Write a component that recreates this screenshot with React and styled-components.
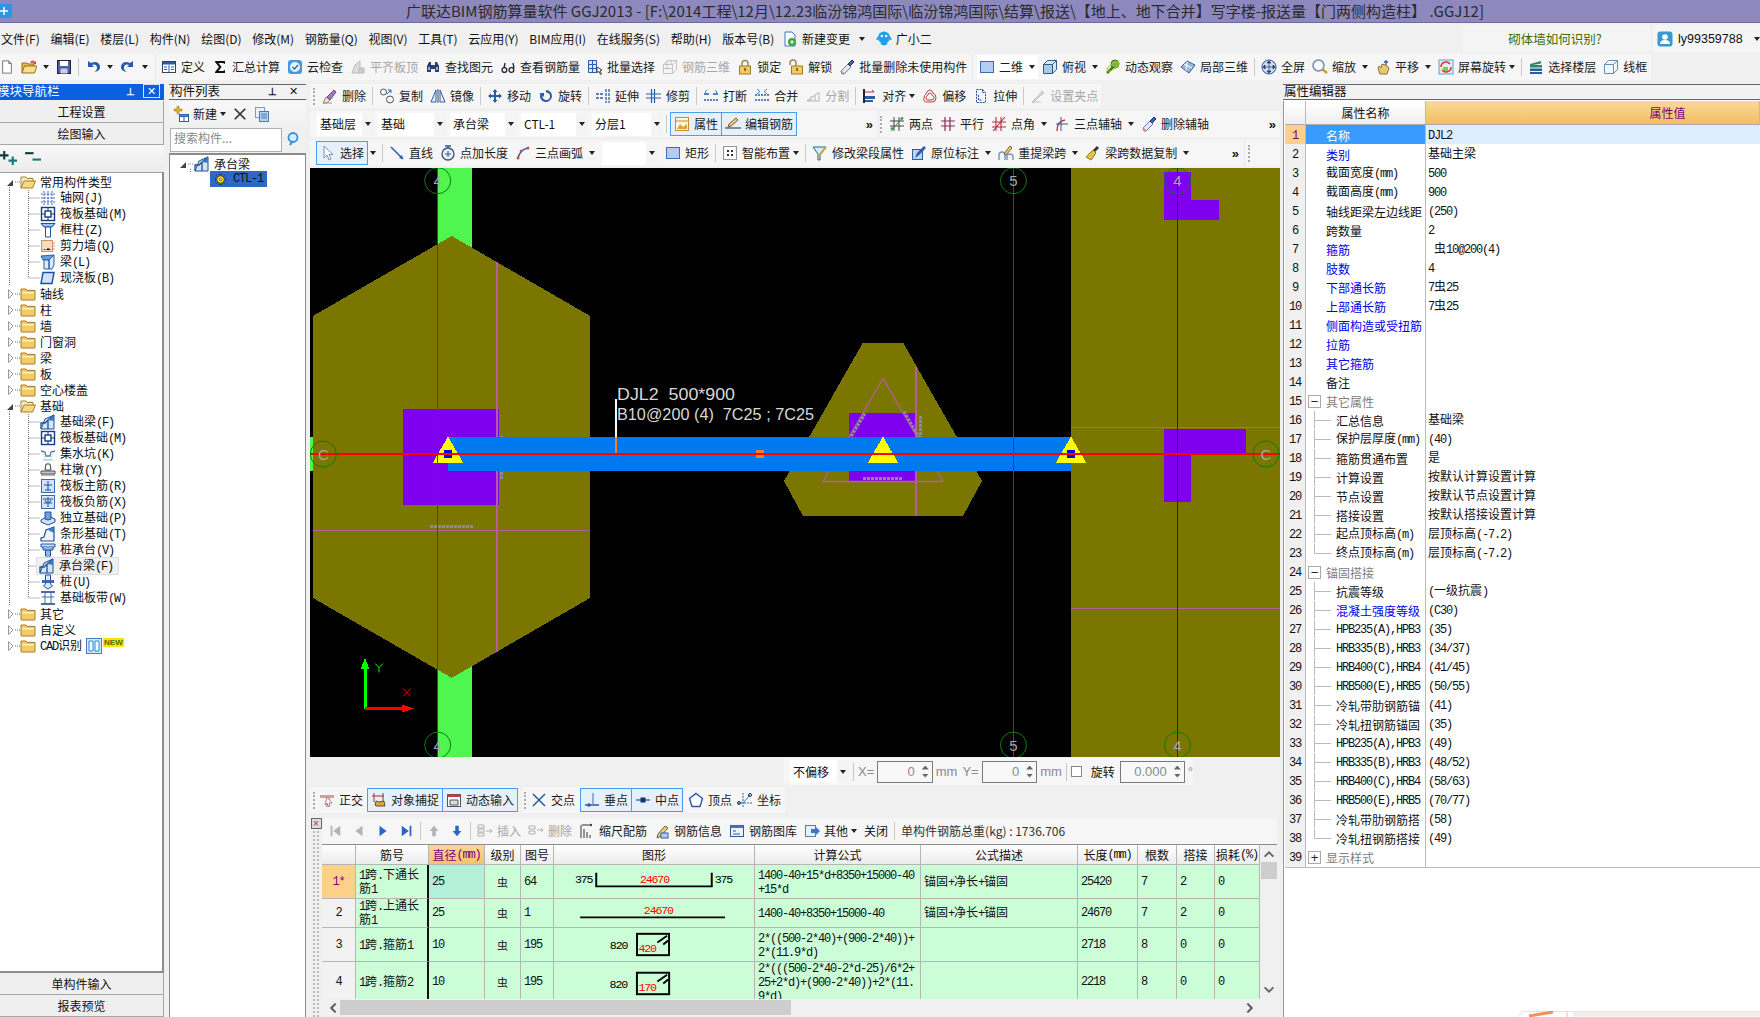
import React from "react"
import styled, { createGlobalStyle } from "styled-components"

const GlobalStyle = createGlobalStyle`
  * { box-sizing: border-box; }
  html, body { margin: 0; padding: 0; overflow: hidden; background: #f0f0f0; }
  body { font: 12px/16px "Noto Sans CJK SC", "Liberation Sans", sans-serif; color: #111; }
`

/* ---------- icons ---------- */
const B = "#2a5ca8"
const icons = {
  doc: <><path d="M3 1h7l3 3v11H3z" fill="#fff" stroke="#667" /><path d="M10 1v3h3" fill="#dde" stroke="#667" /></>,
  open: <><path d="M1 14V4h5l1 1h6v2" fill="#e8b94a" stroke="#94701f" /><path d="M1 14l2.500-7H16l-2.500 7z" fill="#fbdf8f" stroke="#94701f" /><path d="M9 3q3-3 5 0l1-1v3h-3l1-1q-2-1-3 0" fill="#c44" /></>,
  save: <><rect x="1.500" y="1.500" width="13" height="13" fill="#4a5fae" stroke="#223" /><rect x="4" y="2" width="8" height="5" fill="#fff" /><rect x="4.500" y="9.500" width="7" height="5" fill="#c9cfe8" /></>,
  undo: <path d="M3 2v6h6L7 6q4-1.500 5 2 .5 3-3 5 7-1 6-6-2-6-9-3z" fill={B} />,
  redo: <path d="M13 2v6H7l2-2q-4-1.500-5 2-.5 3 3 5-7-1-6-6 2-6 9-3z" fill={B} />,
  define: <><rect x="1.500" y="2.500" width="13" height="11" fill="#fff" stroke="#345" /><rect x="2" y="3" width="12" height="2.500" fill={B} /><path d="M8 6v7M3 8h3M3 10.500h3M10 8h3M10 10.500h3" stroke={B} /></>,
  sigma: <path d="M3 2h10v3L11 4H6.500L9.500 8l-3 4H11l2-1v3H3v-1l4-5-4-5z" fill="#111" />,
  cloud: <><rect x="1" y="1" width="14" height="14" rx="3" fill="#3f9ae0" /><circle cx="8" cy="8" r="5" fill="#eaf4fc" /><path d="M5.500 8l2 2 3.500-4" fill="none" stroke="#1c68b4" strokeWidth="1.400" /></>,
  flush: <><path d="M2 14l3-8 5-4v12z" fill="#ddd" stroke="#bbb" /><path d="M9 9h5v5H9z" fill="#ccc" stroke="#bbb" /></>,
  binoc: <><path d="M2 13V7l2-4h2v10zM10 3h2l2 4v6h-4z" fill="#27406e" /><path d="M6 6h4v4H6z" fill="#27406e" /><path d="M3 8h2v3H3zM11 8h2v3h-2z" fill="#8fb0dc" /></>,
  glasses: <path d="M2 11a2.400 2.400 0 1 0 4.800 0a2.400 2.400 0 1 0 -4.800 0M9 11a2.400 2.400 0 1 0 4.800 0a2.400 2.400 0 1 0 -4.800 0M4 9l1-5M14 9l-1-5" fill="none" stroke="#223" strokeWidth="1.300" />,
  batch: <><path d="M1.500 1.500h8v4h-8zM1.500 5.500h8v4h-8zM1.500 9.500h8v4h-8zM5.500 1.500v12" fill="#dbe6f5" stroke={B} /><path d="M10 8l5 3-2 1 1.500 3-1 .5-1.500-3-2 1z" fill="#fff" stroke="#444" /></>,
  rebar3d: <path d="M1.500 5.500l4-4h9v9l-4 4h-9zM1.500 5.500h9v9M10.500 5.500l4-4M5 1.500v9M9 1.500v4M1.500 9.500h9" fill="none" stroke="#c4c4c4" />,
  lock: <><path d="M5 7V4.500a3 3 0 0 1 6 0V7" fill="none" stroke="#9a8a50" strokeWidth="1.500" /><rect x="2.500" y="7" width="11" height="8" fill="#f0cb62" stroke="#a07c22" /><path d="M8 9v3" stroke="#6a5010" strokeWidth="1.500" /></>,
  unlock: <><path d="M2 6V4a3 3 0 0 1 6 0v3" fill="none" stroke="#9a8a50" strokeWidth="1.500" /><rect x="3.500" y="7" width="11" height="8" fill="#f0cb62" stroke="#a07c22" /><path d="M9 9v3" stroke="#6a5010" strokeWidth="1.500" /></>,
  brush: <><path d="M3 15l-1-3 7-7 3 3-7 7z" fill="#e8e8f4" stroke="#6a7ab4" /><path d="M9 5l4-4 2 2-4 4z" fill="#3c66c0" stroke="#234" /><path d="M2 12l3 3" stroke="#d88" strokeWidth="1.500" /></>,
  square: <rect x="1.500" y="2.500" width="13" height="11" fill="#b4ccf0" stroke="#3d6cb4" />,
  cube: <><path d="M1.500 5.500l4-4h9v9l-4 4h-9z" fill="#d6e7f7" stroke="#2c5d86" /><path d="M1.500 5.500h9v9M10.500 5.500l4-4" fill="none" stroke="#2c5d86" /><path d="M2 6h8v8H2z" fill="#a8cbe8" /></>,
  orbit: <><circle cx="10" cy="5" r="4" fill="#74b83c" stroke="#3c7a18" /><path d="M2 14L8 8" stroke="#3c7a18" strokeWidth="2.500" /><ellipse cx="8" cy="7.500" rx="7" ry="2.500" fill="none" stroke="#b0c020" transform="rotate(-35 8 7.500)" /></>,
  local3d: <><path d="M1 8l6-6 8 4-6 8z" fill="#9bb9dc" stroke="#2d5a92" /><path d="M4 5l8 4M7 2.500l-1 9" stroke="#fff" /></>,
  full: <><circle cx="8" cy="8" r="7" fill="#cfdcef" stroke="#2e4f88" /><path d="M8 3v10M3 8h10M8 2l-2 2h4zM8 14l-2-2h4zM2 8l2-2v4zM14 8l-2-2v4z" fill="#1c3a72" stroke="#1c3a72" strokeWidth=".7" /></>,
  zoom: <><circle cx="6.500" cy="6.500" r="5.500" fill="#f5f7fa" stroke="#7b8da3" strokeWidth="1.500" /><path d="M10 10l5 4" stroke="#c8a028" strokeWidth="2.500" /></>,
  hand: <><path d="M3 9l2 6h7l2-6-2-2-2-1-3-1-1 4-2-2z" fill="#e6c878" stroke="#907030" /><path d="M11 1v5M9 3h4" stroke={B} strokeWidth="1.300" /></>,
  screen: <><rect x="1" y="1" width="14" height="14" fill="#dff0f8" stroke="#5ba0d0" /><path d="M3 8a5 5 0 0 1 9-3M13 8a5 5 0 0 1-9 3" fill="none" stroke="#e03030" strokeWidth="1.500" /><rect x="5" y="8" width="5" height="4" fill="#8bc34a" /></>,
  floors: <><path d="M2 5l11-3v2.500L5 6h9v2.500H2z" fill="#2a8a6a" /><path d="M2 9.500h12V12H2zM2 13h12v2H2z" fill={B} /></>,
  wire: <path d="M1.500 5.500l4-4h9v9l-4 4h-9zM1.500 5.500h9v9M10.500 5.500l4-4" fill="#f4f8fc" stroke="#6e8ca8" />,
  eraser: <><path d="M1 15l3-6 4 3-3 3z" fill="#e9e3c8" stroke="#888" /><path d="M5 9l7-7 2 2-6 8z" fill="#a07ab8" stroke="#6a4a8a" /><path d="M1 15h9" stroke="#e08080" /></>,
  copy: <><circle cx="4.500" cy="4" r="3" fill="none" stroke="#555" /><circle cx="11" cy="11.500" r="3.500" fill="none" stroke="#555" /><path d="M9 2h3v3M12 2L8 6" fill="none" stroke={B} /></>,
  mirror: <><path d="M1 14L6 2v12z" fill="#e8eef6" stroke={B} /><path d="M15 14L10 2v12z" fill="#e8eef6" stroke={B} /><path d="M8 1v14" stroke="#444" /></>,
  move: <path d="M8 1l2.500 3H9v3h3V5.500L15 8l-3 2.500V9H9v3h1.500L8 15l-2.500-3H7V9H4v1.500L1 8l3-2.500V7h3V4H5.500z" fill={B} />,
  rotate: <path d="M8 2a6 6 0 1 1-5.500 3.500L1 5h5v4L4.500 7.500A3.800 3.800 0 1 0 8 4.500z" fill={B} />,
  extend: <path d="M1 6h8M1 10h8M11 1v14M14 1v14" stroke={B} strokeWidth="1.300" strokeDasharray="3 1" />,
  trim: <path d="M0 6h15M0 10h15M5.500 1v14M8.500 1v14" stroke={B} strokeWidth="1.200" />,
  break: <><path d="M1 6h5M10 6h5" stroke={B} strokeWidth="1.500" /><path d="M1 12h14" stroke={B} strokeWidth="1.500" strokeDasharray="2 1" /><path d="M4 2l-2 2 2 2M12 2l2 2-2 2" fill="none" stroke="#2a8ad0" /></>,
  merge: <><path d="M1 7h14M1 12h14" stroke={B} strokeWidth="1.500" strokeDasharray="2 1" /><path d="M3 1l3 2.500L3 6M13 1l-3 2.500L13 6" fill="none" stroke="#2a8ad0" /></>,
  split: <path d="M2 13L13 5M2 13h12V4M6 8v5M10 6v7" fill="none" stroke="#c6c6c6" strokeWidth="1.300" />,
  align: <><path d="M2 1v14" stroke="#223" strokeWidth="2" /><path d="M3 4h9l-2-2" fill="none" stroke="#c03030" /><path d="M3 8h10v3H3zM3 12h8v2H3z" fill="#2a5ca8" /></>,
  offset: <path d="M8 2q2 0 3 3 3 1 3 5 0 4-4 4H5q-4 0-3-4 0-3 2-4 1-4 4-4zM8 5q1.500 0 2 2 2 1 2 3 0 2-3 2H6q-2 0-2-2 0-2 2-3 0-2 2-2z" fill="#f4f4f4" stroke="#c04040" />,
  stretch: <path d="M3.500 1.500h6l3 3v10h-9zM9.500 1.500v3h3M5.500 7v5h4" fill="none" stroke="#23508c" strokeDasharray="2 1" />,
  grip: <path d="M2 14l7-7 3-4 2 2-4 3-7 7zM2 14h9" fill="#d8d8d8" stroke="#c4c4c4" />,
  attr: <><rect x="1.500" y="1.500" width="13" height="13" fill="#fff6dc" stroke="#c88830" /><path d="M1.500 5h13" stroke="#c88830" /><path d="M3 13l3-5 3 3 4-3v5z" fill="#e0a030" /></>,
  editbar: <><path d="M0 12h16" stroke="#555" strokeWidth="1.300" /><path d="M3 11l1-3 7-6 2 2-7 6z" fill="#e8cc88" stroke="#7a5a20" /></>,
  twopt: <><path d="M1 5h14M1 10h14M5 1v14M10 1v14" stroke="#444" /><path d="M2 15L14 1" stroke="#3a9040" /><circle cx="3" cy="12.500" r="1.300" fill="#3a9040" /><circle cx="13" cy="2.500" r="1.300" fill="#3a9040" /></>,
  parallel: <path d="M1 5h14M1 10h14M5 1v14M10 1v14" stroke="#8a2a50" strokeWidth="1.200" />,
  ptangle: <path d="M1 6h14M1 11h14M5 1v14M10 1v14M2 15L14 1" stroke="#b03040" strokeWidth="1.100" />,
  threept: <><path d="M3 15q0-10 8-11" fill="none" stroke="#c83030" strokeWidth="1.300" /><path d="M7 1v14M2 8h12" stroke={B} /></>,
  cursor: <path d="M4 1v12l3-3 2 5 2-1-2-4.500h4z" fill="#fff" stroke="#7a93b8" />,
  line: <><path d="M2 2l12 12" stroke={B} strokeWidth="1.500" /><path d="M14 14l-4-1 3-3z" fill={B} /></>,
  ptlen: <><circle cx="8" cy="9" r="6" fill="#eaf0f8" stroke="#38507c" strokeWidth="1.300" /><path d="M8 6v6M5 9h6" stroke="#38507c" /><path d="M5 1h6M8 1v2" stroke="#2a5ca8" strokeWidth="1.500" /></>,
  arc: <><path d="M3 14q1-9 10-11" fill="none" stroke={B} strokeWidth="1.300" /><circle cx="3" cy="13" r="1.500" fill="#d05030" /><circle cx="13" cy="3" r="1.500" fill="#d05030" /><circle cx="6" cy="6" r="1.300" fill="#d05030" /></>,
  smart: <><rect x="1.500" y="1.500" width="13" height="13" fill="#fff" stroke="#333" strokeDasharray="1 1" /><path d="M5 5h2v2H5zM9 5h2v2H9zM5 9h2v2H5zM9 9h2v2H9z" fill="#334" /></>,
  modify: <><path d="M1 2h13l-6 7v6H6V9z" fill="#d6eef8" stroke="#1a6a9a" /><path d="M6 12l8-10" stroke="#c9a040" strokeWidth="2" /></>,
  insitu: <><rect x="1.500" y="4.500" width="10" height="10" fill="#bcd3f0" stroke={B} /><path d="M4 13l2-5 7-7 2 2-7 7z" fill="#2a5ca8" /></>,
  repick: <><path d="M1 15v-5q0-3 3-3t3 3v5M9 15v-3q0-3 3-3t3 3v3" fill="none" stroke="#7a9ac8" strokeWidth="1.500" /><path d="M6 9l6-8 2 2-6 7z" fill="#e8cc88" stroke="#7a5a20" /></>,
  broom: <><path d="M12 1l2 2-4 4-2-2z" fill="#333" /><path d="M8 5l3 3-5 7-5-3z" fill="#e6c24a" stroke="#96781c" /></>,
  ortho: <><path d="M1 3h14v3H11v9H7V6H1z" fill="#dc9a9a" /><path d="M8 5l5 6-3 0 1 3-2 0-1-3-2 2z" fill="#fff" stroke="#a88" /></>,
  objsnap: <><path d="M3 1v9M1 4h12M12 1v9" stroke="#a03030" /><path d="M4 13l1-4 3 1 5-1 1 5H5z" fill="#d8a850" stroke="#705010" /></>,
  dyn: <><rect x="1.500" y="2.500" width="13" height="12" fill="#fff" stroke="#555" /><path d="M1.500 2.500h13v2.500h-13z" fill="#c04040" /><path d="M4 8h8v5H4z" fill="#ddd" stroke="#555" /></>,
  cross: <path d="M2 2l12 12M14 2L2 14" stroke={B} strokeWidth="1.500" />,
  bigX: <path d="M2 2l12 12M14 2L2 14" stroke="#333" strokeWidth="2" />,
  perp: <><path d="M1 13h14" stroke={B} strokeWidth="1.500" /><path d="M9 1v12" stroke="#6a8ab8" strokeWidth="1.300" /><circle cx="5" cy="13" r="1.800" fill={B} /></>,
  mid: <><path d="M1 8h14" stroke={B} strokeWidth="1.300" /><rect x="5.500" y="5.500" width="5" height="5" fill="#13336a" /></>,
  vertex: <path d="M8 1.500l6.500 5-2.500 8H4l-2.500-8z" fill="#fff" stroke={B} strokeWidth="1.400" />,
  coord: <><path d="M6 1v14M1 11h14" stroke={B} strokeDasharray="2 1" /><path d="M6 11l7-8" stroke="#2a7ab0" /><circle cx="13" cy="3" r="1.500" fill="none" stroke="#225" /><circle cx="2" cy="11" r="1.500" fill="none" stroke="#225" /></>,
  first: <path d="M3 2h2v12H3zM14 2v12L6 8z" fill="#aeb4bc" />,
  prev: <path d="M12 2v12L4 8z" fill="#aeb4bc" />,
  next: <path d="M4 2v12l8-6z" fill="#2a66c8" />,
  last: <path d="M11 2h2v12h-2zM2 2v12l8-6z" fill="#2a66c8" />,
  up: <path d="M8 2l5 6H10v6H6V8H3z" fill="#aeb4bc" />,
  down: <path d="M8 14l5-6H10V2H6v6H3z" fill="#2a66c8" />,
  ins: <path d="M1 2h6v3H1zM1 6h6v3H1zM1 10h6v3H1zM9 8h6M13 6l2 2-2 2" fill="none" stroke="#b0b0b0" />,
  del: <path d="M1 3h6v3H1zM1 8h6v3H1zM9 7h6M13 5l2 2-2 2" fill="none" stroke="#b0b0b0" />,
  scale: <><path d="M2 2v13M5 6v9M8 9v6M11 12v3" stroke="#333" /><path d="M3 2h10M11 1l2 1-2 1" fill="none" stroke="#333" /></>,
  info: <><path d="M3 15l1-4 7-8 3 2-7 8z" fill="#e8cc88" stroke="#7a5a20" /><rect x="7" y="10" width="7" height="5" fill="#b8ccec" stroke={B} /></>,
  lib: <><rect x="1.500" y="2.500" width="13" height="11" fill="#eef3fa" stroke="#2d5a92" /><path d="M1.500 2.500h13v2.500h-13z" fill="#4378c0" /><path d="M4 8h3M4 11h7" stroke="#2d5a92" /></>,
  other: <><rect x="1.500" y="2.500" width="10" height="11" fill="#eaf0fa" stroke="#5a7ab0" /><path d="M7 6h4V3l5 5-5 5v-3H7z" fill="#3b78cc" /></>,
  plus: <><path d="M3 1h2v3h3v2H5v3H3V6H0V4h3z" fill="#0e3c3c" /><path d="M11 6h2v3h3v2h-3v3h-2v-3H8V9h3z" fill="#147a7a" /></>,
  minus: <><path d="M1 2h8v2H1z" fill="#0e3c3c" /><path d="M8 8h8v2H8z" fill="#147a7a" /></>,
  newItem: <><path d="M4 0h2v3h3v2H6v3H4V5H1V3h3z" fill="#d8b820" stroke="#8a7010" strokeWidth=".5" /><rect x="6.500" y="8.500" width="9" height="7" fill="#fff" stroke={B} /><path d="M6.500 8.500h9v2h-9zM11 11v4.500" fill="#5a8ad0" stroke={B} /></>,
  dup: <><rect x="1.500" y="1.500" width="9" height="10" fill="#e8f0fa" stroke="#7a9ad0" /><rect x="5.500" y="5.500" width="9" height="10" fill="#bcd3f0" stroke="#4a78c0" /><path d="M7 8h6M7 10h6M7 12h6" stroke="#4a78c0" /></>,
  search: <><circle cx="7" cy="6.500" r="4.500" fill="#d8ecfa" stroke="#3a90d8" strokeWidth="1.800" /><path d="M4 14l2.500-4" stroke="#3a90d8" strokeWidth="2.200" /></>,
  grid: <path d="M4 1v14M8 1v14M12 1v14M1 4h14M1 8h14M1 12h14" stroke="#3a68b8" strokeDasharray="2 1" />,
  raft: <><rect x="1.500" y="1.500" width="13" height="13" fill="#fff" stroke="#143c80" strokeWidth="1.400" /><rect x="5" y="5" width="6" height="6" fill="#fff" stroke="#143c80" strokeWidth="1.400" /><path d="M1 8h4M11 8h4M8 1v4M8 11v4" stroke="#143c80" /></>,
  col: <><path d="M1 1.500h14l-3 3.500H4z" fill="#9cc4ec" stroke="#1c4f9c" /><path d="M5.500 5h5v10h-5z" fill="#fff" stroke="#1c4f9c" /></>,
  wall: <><rect x="1.500" y="2.500" width="11" height="11" fill="#f6dcc4" stroke="#d09060" /><path d="M3 12l1-1 2 1 2-2 3 2" stroke="#999" strokeDasharray="1 1" /><path d="M13 5h2M13 8h2M13 11h2" stroke="#d09060" /></>,
  beam: <><path d="M1 2l13-1-5 5H3z" fill="#6ca0dc" stroke="#2a5ca8" /><path d="M4 6h5v9H4zM9 6l5-5v10l-2 4H9z" fill="#dcebfb" stroke="#2a5ca8" /></>,
  slab: <path d="M3 2.500h11l-2 11H1z" fill="#cfe2f8" stroke="#1c4f9c" strokeWidth="1.400" />,
  fbeam: <><path d="M1 15l4-10 9-4v14z" fill="#d3e5f8" stroke="#1c4f9c" /><path d="M1 15V9h4l3-3v9M8 6l6-5" fill="none" stroke="#1c4f9c" strokeWidth="1.300" /><path d="M8 6l6-5v6z" fill="#3a78c8" /></>,
  sump: <><path d="M1 5l4 1 1 4h4l1-4 4-1" fill="none" stroke="#5a7ab0" strokeWidth="1.300" /><path d="M3 8l3 6h4l3-6" fill="none" stroke="#9cc" strokeDasharray="1 1" /><path d="M3 14h10" stroke="#9cc" /></>,
  pier: <><path d="M6 2h4l1 6H5z" fill="#fff" stroke="#345" /><path d="M1 9h14v3H1z" fill="#c6c6c6" stroke="#555" /><path d="M1 13h14" stroke="#777" /></>,
  mainbar: <><rect x="1.500" y="1.500" width="13" height="13" fill="#d4e2f6" stroke="#3a68b8" /><path d="M8 3v9M4 7h8M5 12h6" stroke="#1c4f9c" /></>,
  negbar: <><rect x="1.500" y="1.500" width="13" height="13" fill="#d4e2f6" stroke="#3a68b8" /><path d="M3 5h10M8 3v10M4 9h8M5 6l2 3M11 6l-2 3" stroke="#1c4f9c" /></>,
  iso: <><path d="M1 10l7-4 7 3v3l-7 3-7-3z" fill="#cfe0f6" stroke="#1c4f9c" /><path d="M5 2h6v7l-3 1-3-1z" fill="#6ca0dc" stroke="#1c4f9c" /></>,
  strip: <><path d="M1 15v-3l3-1 2-7 8-3v14z" fill="#eef4fb" stroke="#1c4f9c" strokeWidth="1.200" /><path d="M8 4l6-3v6z" fill="#3a78c8" /></>,
  cap: <><path d="M1 2h14v3H1z" fill="#cfe0f6" stroke="#1c4f9c" /><path d="M3 5v3h10V5M5.500 8v6l2.500 2 2.500-2V8" fill="#8fb6e4" stroke="#1c4f9c" /></>,
  pile: <><path d="M5.500 1h5v9l2 2-4.500 3-4.500-3 2-2z" fill="#dce8f8" stroke="#1c4f9c" /><path d="M2 6h12v3H2z" fill="#3a68b8" /></>,
  band: <><path d="M1 2h14M1 14h14" stroke="#143c80" strokeWidth="1.600" /><path d="M5 2v12M11 2v12M2 7h12" stroke="#3a68b8" /></>,
  folder: <><path d="M1 3h5l1 1.500h8V14H1z" fill="#f3cc69" stroke="#a88024" /><path d="M2 6h12v1.500H2z" fill="#fdeeb8" /></>,
  folderOpen: <><path d="M1 14V3h5l1 1.500h6V7" fill="#f5eccd" stroke="#a88024" /><path d="M1 14l3-7h11.500l-3 7z" fill="#f6d785" stroke="#a88024" /></>,
  sun: <><path d="M5.500 0.500h5M5.500 15.500h5M0.500 5.500v5M15.500 5.500v5M2 2l2 2M14 14l-2-2M2 14l2-2M14 2l-2 2" stroke="#222" /><circle cx="8" cy="8" r="5.500" fill="#ffe800" stroke="#222" /><circle cx="8" cy="8" r="2" fill="#fff" stroke="#222" /></>,
  blocks: <><rect x="0.500" y="0.500" width="15" height="15" fill="#d8e8fb" stroke="#4a78c0" /><path d="M3 3h4v10H3zM9 3h4v10H9z" fill="#fff" stroke="#1c8ad8" /></>,
  tip: <><circle cx="8" cy="6.500" r="6" fill="#1da0e8" /><path d="M2 6l-1 3M14 6l1 3" stroke="#1da0e8" strokeWidth="1.500" /><circle cx="5.800" cy="5" r="1.200" fill="#fff" /><circle cx="10.200" cy="5" r="1.200" fill="#fff" /><path d="M4 12q4 5 8 0z" fill="#1da0e8" /></>,
  change: <><path d="M3 1h7l3 3v11H3z" fill="#fff" stroke="#3a78c8" /><circle cx="10" cy="11" r="4" fill="#3aa83a" /><path d="M8 11h4M10 9v4" stroke="#fff" /></>,
  user: <><rect x="0.500" y="0.500" width="15" height="15" rx="3" fill="#3a98d0" /><circle cx="8" cy="6" r="2.800" fill="#fff" /><path d="M3 13q0-4 5-4t5 4z" fill="#fff" /></>,
  app: <><rect x="-6" y="1" width="18" height="14" rx="2" fill="#2c96e4" /><path d="M0 8h8M4 4v8" stroke="#fff" strokeWidth="1.500" /></>,
  chevUp: <path d="M3 11l5-5 5 5" fill="none" stroke="#666" strokeWidth="2.200" />,
  chevDown: <path d="M3 5l5 5 5-5" fill="none" stroke="#666" strokeWidth="2.200" />,
  chevLeft: <path d="M11 3L6 8l5 5" fill="none" stroke="#555" strokeWidth="2.200" />,
  chevRight: <path d="M5 3l5 5-5 5" fill="none" stroke="#555" strokeWidth="2.200" />,
}

const Svg = styled.svg`
  flex: none;
  display: block;
  width: ${(p) => p.$w || 16}px;
  height: ${(p) => p.$h || p.$w || 16}px;
`
const Icon = ({ name, size }) => <Svg $w={size} viewBox="0 0 16 16">{icons[name]}</Svg>

/* ---------- SimSun-like half-width latin inside cells ---------- */
const Lat = styled.span`
  font-family: "Liberation Mono", monospace;
  font-size: 12px;
  letter-spacing: -1.2px;
`
const T = ({ children }) =>
  String(children)
    .split(/([\x00-\x7f]+)/)
    .map((s, i) => (/[\x00-\x7f]/.test(s) ? <Lat key={i}>{s}</Lat> : s))

/* ---------- top ---------- */
const Root = styled.div`
  position: relative;
  width: 1760px;
  height: 1017px;
  display: flex;
  flex-direction: column;
  overflow: hidden;
  background: #f0f0f0;
`
const TitleBar = styled.div`
  height: 23px;
  flex: none;
  display: flex;
  align-items: center;
  background: #8d88be;
  border-bottom: 1px solid #6e6a9c;
  font-size: 15px;
  color: #2a2a2a;
  white-space: nowrap;
`
const TitleText = styled.span`
  margin-left: 390px;
`
const MenuBar = styled.div`
  height: 31px;
  flex: none;
  display: flex;
  align-items: center;
  padding-left: 1px;
  gap: 10.7px;
`
const MenuItem = styled.span`
  display: inline-flex;
  align-items: center;
  gap: 4px;
  white-space: nowrap;
  margin-left: ${(p) => p.$ml || 0}px;
`
const HelpBand = styled.div`
  margin-left: auto;
  width: 187px;
  height: 27px;
  padding-left: 45px;
  display: flex;
  align-items: center;
  background: #f5f5f5;
  color: #3a6b00;
  font-size: 12.500px;
`
const UserBand = styled.div`
  width: 107px;
  height: 27px;
  margin-left: -8px;
  padding-left: 4px;
  display: flex;
  align-items: center;
  gap: 5px;
  background: #f5f5f5;
  font: 12.500px "Liberation Sans", sans-serif;
`
const Row = styled.div`
  height: ${(p) => p.$h}px;
  flex: none;
  display: flex;
  align-items: stretch;
  gap: 3px;
  margin-top: ${(p) => p.$mt || 0}px;
  margin-left: ${(p) => p.$ml || 0}px;
`
const Band = styled.div`
  display: flex;
  align-items: center;
  gap: ${(p) => p.$gap ?? 7}px;
  padding: 0 ${(p) => p.$pr || 0}px 0 ${(p) => p.$pl || 0}px;
  background: #f6f6f6;
  border-radius: 2px;
  white-space: nowrap;
  ${(p) => p.$w && `width: ${p.$w}px;`}
  ${(p) => p.$grow && "flex: 1;"}
`
const ToolItem = styled.div`
  height: ${(p) => (p.$on || p.$plate ? 24 : 22)}px;
  display: inline-flex;
  align-items: center;
  gap: 4px;
  margin-left: ${(p) => p.$ml || 0}px;
  color: ${(p) => (p.$off ? "#a6a6a6" : "#1a1a1a")};
  ${(p) => p.$on && "padding: 0 3px; background: #e5f0fb; border: 1px solid #4a9cf0;"}
  ${(p) => p.$plate && "padding: 0 3px 0 2px; background: #fff;"}
`
const Caret = styled.i`
  flex: none;
  width: 0;
  height: 0;
  margin-left: ${(p) => p.$ml ?? 0}px;
  border: 3px solid transparent;
  border-top: 4px solid #222;
  border-bottom: 0;
`
const Sep = styled.i`
  flex: none;
  width: 1px;
  height: 18px;
  margin: 0 ${(p) => p.$m ?? -1}px;
  background: #c8c8c8;
`
const Grip = styled.i`
  flex: none;
  width: 0;
  height: 17px;
  border-left: 2px dotted #aaa;
`
const More = styled.span`
  margin-left: auto;
  font: bold 13px "Liberation Sans", sans-serif;
`
const ComboBox = styled.div`
  flex: none;
  width: ${(p) => p.$w}px;
  height: 23px;
  display: flex;
  align-items: center;
  justify-content: space-between;
  padding-left: 3px;
  background: #fff;
`
const ComboArrow = styled.span`
  width: 12px;
  height: 100%;
  display: flex;
  align-items: center;
  justify-content: center;
  background: #f4f4f4;
`

const Tool = ({ icon, label, off, on, plate, caret, size, ml }) => (
  <ToolItem $off={off} $on={on} $plate={plate} $ml={ml}>
    <Icon name={icon} size={size} />
    {label && <span>{label}</span>}
    {caret === "tight" && <Caret $ml={-1} />}
    {caret === "wide" && <Caret $ml={2} />}
  </ToolItem>
)
const Combo = ({ w, text }) => (
  <ComboBox $w={w}>
    <span>{text}</span>
    <ComboArrow><Caret /></ComboArrow>
  </ComboBox>
)

/* ---------- workspace ---------- */
const Workspace = styled.div`
  flex: 1;
  min-height: 0;
  margin-top: 4px;
  display: flex;
`
const PanelHead = styled.div`
  height: 16px;
  flex: none;
  display: flex;
  align-items: center;
  gap: 8px;
  padding: 0 4px 2px ${(p) => p.$pl ?? 1}px;
  line-height: 14px;
  white-space: nowrap;
  color: ${(p) => (p.$active ? "#fff" : "#111")};
  background: ${(p) => (p.$active ? "#0a60e0" : "#f2f2f2")};
  border-top: 1px solid ${(p) => (p.$active ? "#0a60e0" : "#666")};
  border-bottom: 1px solid ${(p) => (p.$active ? "#0a60e0" : "#666")};
  font-size: 12.500px;
`
const CutLabel = styled.span`
  margin-left: -3px;
`
const HeadSpacer = styled.span`
  flex: 1;
`
const CloseBox = styled.span`
  width: 17px;
  height: 14px;
  display: flex;
  align-items: center;
  justify-content: center;
  border: ${(p) => (p.$box ? "1px solid #cfe0ff" : "0")};
  font: 11px "Liberation Sans", sans-serif;
`
const Pin = styled.span`
  font: bold 10px "Liberation Sans", sans-serif;
`
const NavPanel = styled.div`
  width: 164px;
  flex: none;
  display: flex;
  flex-direction: column;
`
const NavButton = styled.div`
  height: 22px;
  flex: none;
  margin-top: ${(p) => p.$mt || 0}px;
  display: flex;
  align-items: center;
  justify-content: center;
  background: #efefef;
  border-bottom: 1px solid #a8a8a8;
  border-right: 1px solid #a8a8a8;
`
const NavTools = styled.div`
  height: 27px;
  flex: none;
  display: flex;
  align-items: center;
  gap: 7px;
  background: linear-gradient(#f8f8f8, #ececec);
`
const NavTree = styled.div`
  flex: 1;
  min-height: 0;
  padding-top: 1px;
  background: #fff;
  border-top: 1px solid #a0a0a0;
  border-right: 2px solid #8c8c8c;
  border-bottom: 2px solid #8c8c8c;
`
const TreeRow = styled.div`
  height: 16px;
  display: flex;
  align-items: center;
  white-space: nowrap;
`
const TreeBody = styled.div`
  display: flex;
  align-items: center;
  height: 16px;
  gap: 4px;
  ${(p) => p.$hot && "margin-left: -3px; padding: 0 1px 0 2px; width: 81px; background: #f0f0f0; outline: 1px solid #ddd;"}
`
const NewBadge = styled.span`
  margin-left: -3px;
  margin-top: -8px;
  padding: 0 1px;
  background: #ffe400;
  color: #4a6a00;
  font: bold 8px/9px "Liberation Sans", sans-serif;
`
const ListPanel = styled.div`
  width: 137px;
  flex: none;
  margin-left: 5px;
  display: flex;
  flex-direction: column;
`
const ListTools = styled.div`
  height: 26px;
  flex: none;
  display: flex;
  align-items: center;
  gap: 7px;
  padding-left: 4px;
  margin-top: 1px;
  background: linear-gradient(#f8f8f8, #f0f0f0);
`
const SearchRow = styled.div`
  height: 26px;
  flex: none;
  display: flex;
  align-items: flex-start;
  gap: 4px;
  padding: 1px 0 0 1px;
`
const SearchBtn = styled.span`
  margin-top: 3px;
`
const SearchInput = styled.div`
  width: 112px;
  height: 24px;
  padding: 1px 3px;
  background: #fff;
  border: 1px solid #b0b0b0;
  color: #8a8a8a;
`
const ListTree = styled.div`
  flex: 1;
  min-height: 0;
  padding-top: 1px;
  background: #fff;
  border: 1px solid #8c8c8c;
  border-top-width: 2px;
  border-bottom: 0;
`
const ListItem = styled.div`
  width: 57px;
  height: 16px;
  margin-left: 40px;
  margin-top: -1px;
  padding-left: 5px;
  display: flex;
  align-items: center;
  gap: 7px;
  background: #2f68c4;
`
const Center = styled.div`
  width: 970px;
  flex: none;
  margin-left: 4px;
  display: flex;
  flex-direction: column;
`
const CanvasBox = styled.svg`
  display: block;
  flex: none;
  width: 970px;
  height: 589px;
  margin-top: 2px;
  background: #000;
  text {
    font-family: "Liberation Sans", sans-serif;
    white-space: pre;
  }
`
const Spin = styled.div`
  width: ${(p) => p.$w}px;
  height: 22px;
  display: flex;
  align-items: center;
  justify-content: flex-end;
  gap: 7px;
  padding-right: 3px;
  background: #f8f8f8;
  border: 1px solid #7a7a7a;
  color: #8a8a8a;
  font: 13px "Liberation Sans", sans-serif;
`
const SpinArrows = styled.span`
  display: flex;
  flex-direction: column;
  gap: 4px;
  flex: none;
  width: 7px;
  & > i {
    display: block;
    flex: none;
    width: 7px;
    height: 4px;
    background: #666;
  }
  & > i:first-child {
    clip-path: polygon(50% 0, 100% 100%, 0 100%);
  }
  & > i:last-child {
    clip-path: polygon(0 0, 100% 0, 50% 100%);
  }
`
const Muted = styled.span`
  color: #8a8a8a;
  margin-left: ${(p) => p.$ml || 0}px;
  font: 13px "Liberation Sans", sans-serif;
`
const Check = styled.i`
  width: 11px;
  height: 11px;
  flex: none;
  background: #fff;
  border: 1px solid #888;
`
const SpinLabel = styled.span`
  margin: 0 2px 0 6px;
`
const Lower = styled.div`
  flex: 1;
  min-height: 0;
  margin-top: 5px;
  display: flex;
`
const Rail = styled.div`
  width: 12px;
  flex: none;
  display: flex;
  flex-direction: column;
  align-items: center;
  gap: 1px;
`
const RailClose = styled.span`
  width: 11px;
  height: 11px;
  display: flex;
  align-items: center;
  justify-content: center;
  border: 1px solid #666;
  background: #ddd;
  color: #a33;
  font: 10px/1 "Liberation Sans", sans-serif;
`
const RailDots = styled.div`
  flex: 1;
  width: 8px;
  background-image: radial-gradient(#bdbdbd 1px, transparent 1.200px);
  background-size: 4px 4px;
`
const LowerMain = styled.div`
  width: 955px;
  flex: none;
  display: flex;
  flex-direction: column;
`
const RebarBar = styled(Band)`
  height: 26px;
  flex: none;
  padding-left: 6px;
`
const IconGroup = styled.div`
  display: flex;
  align-items: center;
  gap: ${(p) => p.$gap}px;
`
const Sum = styled.span`
  color: #333;
`
const TableWrap = styled.div`
  height: 155px;
  flex: none;
  display: flex;
  overflow: hidden;
  border-top: 1px solid #8c8c8c;
`
const cols = "34px 73px 56px 36px 33px 201px 166px 157px 60px 39px 38px 45px"
const RebarRow = styled.div`
  display: grid;
  grid-template-columns: ${cols};
  height: ${(p) => p.$h}px;
`
const HeadCell = styled.div`
  display: flex;
  align-items: center;
  justify-content: center;
  white-space: nowrap;
  overflow: hidden;
  border-right: 1px solid #b5b5b5;
  border-bottom: 1px solid #b5b5b5;
  background: ${(p) => (p.$hot ? "linear-gradient(#fad797,#f5c469)" : "linear-gradient(#fff,#ececec)")};
  color: ${(p) => (p.$hot ? "#7d0080" : "#111")};
`
const Cell = styled.div`
  display: flex;
  align-items: center;
  justify-content: ${(p) => (p.$center ? "center" : "flex-start")};
  padding: 0 ${(p) => (p.$center ? 0 : 3)}px;
  line-height: 12px;
  word-break: break-all;
  overflow: hidden;
  background: ${(p) => p.$bg || "#cbfdd6"};
  color: ${(p) => p.$color || "#111"};
  font-size: ${(p) => p.$fs || 12}px;
  border-right: ${(p) => (p.$heavy ? "2px solid #111" : "1px solid #b5b5b5")};
  border-bottom: 1px solid #b5b5b5;
  & > svg {
    width: 100%;
    height: 100%;
    display: block;
  }
`
const FigureSvg = styled.svg`
  text {
    font-family: "Liberation Mono", monospace;
    font-size: 12px;
    letter-spacing: -1.200px;
  }
`
const VScroll = styled.div`
  width: 17px;
  flex: none;
  display: flex;
  flex-direction: column;
  align-items: center;
  padding: 2px 0;
`
const VThumb = styled.div`
  width: 16px;
  height: 17px;
  margin: 1px 0 auto;
  background: #cdcdcd;
`
const HScroll = styled.div`
  height: 17px;
  flex: none;
  display: flex;
  align-items: center;
  justify-content: space-between;
  padding: 0 20px 0 4px;
`
const HThumb = styled.div`
  width: 451px;
  height: 15px;
  margin-right: auto;
  background: #cdcdcd;
`
const PropsPanel = styled.div`
  flex: 1;
  margin-left: 3px;
  display: flex;
  flex-direction: column;
  background: #fff;
  overflow: hidden;
`
const PropsGrid = styled.div`
  flex: 1;
  margin-top: 1px;
  padding-left: 1px;
  border-left: 1px solid #999;
`
const PropRow = styled.div`
  display: grid;
  grid-template-columns: 21px 120px 1fr;
  height: ${(p) => p.$h || 19}px;
  line-height: 17px;
`
const PropHead = styled.div`
  display: flex;
  align-items: center;
  justify-content: center;
  padding-left: ${(p) => p.$pl || 0}px;
  background: ${(p) => (p.$hot ? "linear-gradient(#fad99a,#f3bf60)" : "linear-gradient(#fff,#eee)")};
  color: ${(p) => (p.$hot ? "#7d0080" : "#111")};
  border-right: 1px solid #bbb;
  border-bottom: 1px solid #aaa;
`
const PropNum = styled.div`
  text-align: center;
  background: ${(p) => (p.$sel ? "#fdd08a" : "#f0f0f0")};
  color: ${(p) => (p.$sel ? "#7d0080" : "#111")};
  border-right: 1px solid #bbb;
  border-bottom: 1px solid #bbb;
`
const PropName = styled.div`
  display: flex;
  align-items: center;
  white-space: nowrap;
  padding-left: ${(p) => p.$pl}px;
  background: ${(p) => (p.$sel ? "#3a9bff" : "#fff")};
  color: ${(p) => (p.$sel ? "#fff" : p.$link ? "#0000f0" : p.$group ? "#808080" : "#111")};
  border-right: 1px solid #bbb;
  border-bottom: 1px solid #bbb;
`
const PropValue = styled.div`
  padding-left: ${(p) => (p.$indent ? 8 : 2)}px;
  white-space: nowrap;
  background: ${(p) => (p.$sel ? "#dfeeff" : "#fff")};
  border-bottom: 1px solid #bbb;
`
const ExpandBox = styled.span`
  width: 13px;
  height: 13px;
  margin-right: 5px;
  flex: none;
  display: flex;
  align-items: center;
  justify-content: center;
  background: #fff;
  border: 1px solid #aaa;
  color: #222;
  font: 13px/1 "Liberation Sans", sans-serif;
`
/* stray window sliver that pokes in along the bottom edge of the screenshot */
const BottomSliver = styled.svg`
  position: absolute;
  left: 1519px;
  top: 1011px;
  width: 241px;
  height: 6px;
`

/* ---------- data ---------- */
const menus = ["文件(F)", "编辑(E)", "楼层(L)", "构件(N)", "绘图(D)", "修改(M)", "钢筋量(Q)", "视图(V)", "工具(T)", "云应用(Y)", "BIM应用(I)", "在线服务(S)", "帮助(H)", "版本号(B)"]

// [level, text, icon, flag]
const navTree = [
  [1, "常用构件类型", "folderOpen", "open"],
  [2, "轴网(J)", "grid"], [2, "筏板基础(M)", "raft"], [2, "框柱(Z)", "col"], [2, "剪力墙(Q)", "wall"], [2, "梁(L)", "beam"], [2, "现浇板(B)", "slab", "end"],
  [1, "轴线", "folder"], [1, "柱", "folder"], [1, "墙", "folder"], [1, "门窗洞", "folder"], [1, "梁", "folder"], [1, "板", "folder"], [1, "空心楼盖", "folder"],
  [1, "基础", "folderOpen", "open"],
  [2, "基础梁(F)", "fbeam"], [2, "筏板基础(M)", "raft"], [2, "集水坑(K)", "sump"], [2, "柱墩(Y)", "pier"], [2, "筏板主筋(R)", "mainbar"], [2, "筏板负筋(X)", "negbar"], [2, "独立基础(P)", "iso"], [2, "条形基础(T)", "strip"], [2, "桩承台(V)", "cap"],
  [2, "承台梁(F)", "fbeam", "hot"], [2, "桩(U)", "pile"], [2, "基础板带(W)", "band", "end"],
  [1, "其它", "folder"], [1, "自定义", "folder"], [1, "CAD识别", "folder", "cad"],
]

const props = [
  ["名称", "DJL2", "sel"], ["类别", "基础主梁", "link"], ["截面宽度(mm)", "500"], ["截面高度(mm)", "900"], ["轴线距梁左边线距", "(250)"], ["跨数量", "2"],
  ["箍筋", "虫10@200(4)", "rebar"], ["肢数", "4", "link"], ["下部通长筋", "7虫25", "link"], ["上部通长筋", "7虫25", "link"], ["侧面构造或受扭筋", "", "link"], ["拉筋", "", "link"], ["其它箍筋", "", "link"], ["备注", ""],
  ["其它属性", "", "minus"], ["汇总信息", "基础梁", "child"], ["保护层厚度(mm)", "(40)", "child"], ["箍筋贯通布置", "是", "child"], ["计算设置", "按默认计算设置计算", "child"], ["节点设置", "按默认节点设置计算", "child"], ["搭接设置", "按默认搭接设置计算", "child"], ["起点顶标高(m)", "层顶标高(-7.2)", "child"], ["终点顶标高(m)", "层顶标高(-7.2)", "last"],
  ["锚固搭接", "", "minus"], ["抗震等级", "(一级抗震)", "child"], ["混凝土强度等级", "(C30)", "childlink"], ["HPB235(A),HPB3", "(35)", "child"], ["HRB335(B),HRB3", "(34/37)", "child"], ["HRB400(C),HRB4", "(41/45)", "child"], ["HRB500(E),HRB5", "(50/55)", "child"], ["冷轧带肋钢筋锚", "(41)", "child"], ["冷轧扭钢筋锚固", "(35)", "child"], ["HPB235(A),HPB3", "(49)", "child"], ["HRB335(B),HRB3", "(48/52)", "child"], ["HRB400(C),HRB4", "(58/63)", "child"], ["HRB500(E),HRB5", "(70/77)", "child"], ["冷轧带肋钢筋搭", "(58)", "child"], ["冷轧扭钢筋搭接", "(49)", "last"],
  ["显示样式", "", "plus"],
]

const rebarHead = ["", "筋号", "直径(mm)", "级别", "图号", "图形", "计算公式", "公式描述", "长度(mm)", "根数", "搭接", "损耗(%)"]

const Figure = ({ h, children }) => <FigureSvg viewBox={`0 0 201 ${h}`}>{children}</FigureSvg>
const Stirrup = ({ top, label }) => (
  <>
    <text x="55" y={top + 16}>820</text>
    <rect x="83" y={top} width="33" height="22" fill="none" stroke="#000" strokeWidth="2" />
    <path d={`M104 ${top + 9}L114 ${top + 2}M110 ${top + 11}L115 ${top + 7}`} stroke="#000" strokeWidth="2" />
    <text x="84.500" y={top + 19} fill="#f00">{label}</text>
  </>
)
const rebarRows = [
  { h: 34, sel: true, no: "1*", name: "1跨.下通长筋1", d: "25", fig: 64, formula: "1400-40+15*d+8350+15000-40+15*d", desc: "锚固+净长+锚固", len: "25420", n: "7", lap: "2",
    draw: <Figure h={34}><text x="19" y="19">375</text><path d="M41 8V22H160V8" fill="none" stroke="#000" strokeWidth="2" /><text x="86" y="19" fill="#f00">24670</text><text x="163" y="19">375</text></Figure> },
  { h: 29, no: "2", name: "1跨.上通长筋1", d: "25", fig: 1, formula: "1400-40+8350+15000-40", desc: "锚固+净长+锚固", len: "24670", n: "7", lap: "2",
    draw: <Figure h={29}><text x="90" y="16" fill="#f00">24670</text><path d="M24 19H174" stroke="#000" strokeWidth="2" /></Figure> },
  { h: 34, no: "3", name: "1跨.箍筋1", d: "10", fig: 195, formula: "2*((500-2*40)+(900-2*40))+2*(11.9*d)", desc: "", len: "2718", n: "8", lap: "0",
    draw: <Figure h={34}><Stirrup top={6} label="420" /></Figure> },
  { h: 41, no: "4", name: "1跨.箍筋2", d: "10", fig: 195, formula: "2*(((500-2*40-2*d-25)/6*2+25+2*d)+(900-2*40))+2*(11.9*d)", desc: "", len: "2218", n: "8", lap: "0",
    draw: <Figure h={41}><Stirrup top={11} label="170" /></Figure> },
]

/* ---------- small parts ---------- */
const TreeGuide = ({ level, open, last }) =>
  level === 1 ? (
    <Svg $w={20} $h={16} viewBox="0 0 20 16">
      {open ? <path d="M13 6v6H7z" fill="#444" /> : <path d="M8.500 3.500L13 8l-4.500 4.500z" fill="#fff" stroke="#999" />}
      <path d="M15 8h5" stroke="#777" strokeDasharray="1 1" />
      {open && <path d="M9.500 13v3" stroke="#777" strokeDasharray="1 1" />}
    </Svg>
  ) : (
    <Svg $w={40} $h={16} viewBox="0 0 40 16">
      <path d={`M9.500 0v16M28.500 0v${last ? 8 : 16}M28.500 8H40`} fill="none" stroke="#777" strokeDasharray="1 1" />
    </Svg>
  )

const NavNode = ({ node: [level, text, icon, flag] }) => (
  <TreeRow>
    <TreeGuide level={level} open={flag === "open"} last={flag === "end"} />
    <TreeBody $hot={flag === "hot"}>
      <Icon name={icon} />
      <span><T>{text}</T></span>
      {flag === "cad" && <Icon name="blocks" />}
      {flag === "cad" && <NewBadge>NEW</NewBadge>}
    </TreeBody>
  </TreeRow>
)

const PropLine = ({ index, row: [name, value, kind] }) => {
  const sel = kind === "sel"
  const isChild = kind === "child" || kind === "last" || kind === "childlink"
  const group = kind === "minus" || kind === "plus"
  return (
    <PropRow>
      <PropNum $sel={sel}><T>{index}</T></PropNum>
      <PropName $sel={sel} $link={kind === "link" || kind === "rebar" || kind === "childlink"} $group={group} $pl={group ? 2 : isChild ? 0 : 20}>
        {group && <ExpandBox>{kind === "minus" ? "−" : "+"}</ExpandBox>}
        {isChild && (
          <Svg $w={30} $h={19} viewBox="0 0 30 19">
            <path d={`M8.500 0v${kind === "last" ? 9.500 : 19}M8.500 9.500H25`} fill="none" stroke="#bbb" />
          </Svg>
        )}
        <span><T>{name}</T></span>
      </PropName>
      <PropValue $sel={sel} $indent={kind === "rebar"}><T>{value}</T></PropValue>
    </PropRow>
  )
}

const Bubble = ({ x, y, label }) => (
  <>
    <circle cx={x} cy={y} r="13" fill="none" stroke="#0a7d0a" />
    <text x={x} y={y + 5.500} fill="#a8a8a8" fontSize="15" textAnchor="middle">{label}</text>
  </>
)
const Marker = ({ x, square }) => (
  <>
    <path d={`M${x} 270L${x + 15} 296H${x - 15}z`} fill="#ffff00" />
    {square && <path d={`M${x - 4} 283h8v3h-8zM${x - 4} 288h8v3h-8z`} fill="#0000f0" />}
  </>
)
const M = "#b060a0"
const Drawing = () => (
  <CanvasBox viewBox="0 1.500 970 589" shapeRendering="crispEdges">
    <rect x="127" y="0" width="35" height="592" fill="#4ff64f" />
    <rect x="0" y="270" width="3" height="34" fill="#4ff64f" />
    <rect x="761" y="0" width="209" height="592" fill="#7a7600" />
    <polygon points="141.700,69.500 280,149.400 280,431.500 141.700,511.400 3,431.500 3,149.400" fill="#7a7600" />
    <polygon points="552.700,176.600 593.300,176.600 672,314.500 653.300,349 492.700,349 474,314.500" fill="#7a7600" />
    <rect x="93" y="242" width="96" height="96" fill="#7f00ef" />
    <rect x="539" y="246" width="66" height="69" fill="#7f00ef" />
    <path d="M854 5h27v28h28v20h-55zM854 262h82v25h-55v48h-27z" fill="#7f00ef" />
    <path d="M187 95V485M3 364H279M606 200V349M761 261H970M761 442H970" stroke={M} strokeWidth="1.500" />
    <polygon points="573,212 513,315 633,315" fill="none" stroke={M} strokeWidth="1.300" shapeRendering="auto" />
    <path d="M191 269V312M120 360H163M610 249V299M553 312H593M550 287H560M588 287H596" stroke="#8d8d8d" strokeWidth="3" strokeDasharray="3 1" />
    <path d="M535 280L555 247M594 245L613 278" stroke="#8d8d8d" strokeWidth="3" strokeDasharray="3 1" shapeRendering="auto" />
    <rect x="138" y="270" width="623" height="34" fill="#0078f0" />
    <path d="M306 232V270" stroke="#fff" strokeWidth="2" />
    <path d="M306 270V287" stroke="#f08020" strokeWidth="2" />
    <path d="M446 283h8v3h-8zM446 288h8v3h-8z" fill="#f08020" />
    <Marker x={138} square />
    <Marker x={573} />
    <Marker x={761} square />
    <path d="M127.500 0V592M703.500 0V592" stroke="#e00000" />
    <path d="M867.500 0V592" stroke="#7a0000" />
    <path d="M0 287.500H970" stroke="#ff0000" strokeWidth="1.200" />
    <g shapeRendering="auto">
      <Bubble x={127.700} y={14.200} label="4" />
      <Bubble x={127.700} y={578.600} label="4" />
      <Bubble x={703.500} y={14.200} label="5" />
      <Bubble x={703.500} y={578.600} label="5" />
      <Bubble x={867.500} y={14.200} label="4" />
      <Bubble x={867.500} y={578.600} label="4" />
      <Bubble x={13.300} y={287.500} label="C" />
      <Bubble x={956} y={287.500} label="C" />
      <text x="307" y="233" fill="#d8d8d8" fontSize="16" textLength="118" lengthAdjust="spacingAndGlyphs">DJL2  500*900</text>
      <text x="307" y="253" fill="#d8d8d8" fontSize="16" textLength="197" lengthAdjust="spacingAndGlyphs">B10@200 (4)  7C25 ; 7C25</text>
    </g>
    <path d="M55 542V500" stroke="#00ff00" strokeWidth="3" />
    <path d="M55 491l4 11h-8z" fill="#00ff00" />
    <path d="M55 542H95" stroke="#ff0000" strokeWidth="3" />
    <path d="M104 542l-12 4v-8z" fill="#ff0000" />
    <path d="M65 497l4 4 4-4M69 501v5" fill="none" stroke="#00ff00" shapeRendering="auto" />
    <path d="M93 522l8 8M101 522l-8 8" stroke="#ff0000" shapeRendering="auto" />
  </CanvasBox>
)

export default function App() {
  return (
    <Root>
      <GlobalStyle />
      <TitleBar>
        <Icon name="app" size={16} />
        <TitleText>广联达BIM钢筋算量软件 GGJ2013 - [F:\2014工程\12月\12.23临汾锦鸿国际\临汾锦鸿国际\结算\报送\【地上、地下合并】写字楼-报送量【门两侧构造柱】 .GGJ12]</TitleText>
      </TitleBar>

      <MenuBar>
        {menus.map((m) => <MenuItem key={m}>{m}</MenuItem>)}
        <MenuItem $ml={-3}><Icon name="change" />新建变更<Caret $ml={5} /></MenuItem>
        <MenuItem><Icon name="tip" />广小二</MenuItem>
        <HelpBand>砌体墙如何识别?</HelpBand>
        <UserBand><Icon name="user" />ly99359788<Caret $ml={6} /></UserBand>
      </MenuBar>

      <Row $h={26}>
        <Band $w={154}>
          <Icon name="doc" size={14} />
          <Tool icon="open" caret="wide" />
          <Tool icon="save" />
          <Sep />
          <Tool icon="undo" caret="wide" />
          <Tool icon="redo" caret="wide" />
        </Band>
        <Band $w={814} $pl={4}>
          <Tool icon="define" label="定义" />
          <Tool icon="sigma" label="汇总计算" />
          <Tool icon="cloud" label="云检查" />
          <Tool icon="flush" label="平齐板顶" off />
          <Tool icon="binoc" label="查找图元" />
          <Tool icon="glasses" label="查看钢筋量" />
          <Tool icon="batch" label="批量选择" />
          <Tool icon="rebar3d" label="钢筋三维" off />
          <Tool icon="lock" label="锁定" />
          <Tool icon="unlock" label="解锁" />
          <Tool icon="brush" label="批量删除未使用构件" />
        </Band>
        <Band $w={677} $pl={3}>
          <Tool plate icon="square" label="二维" caret="wide" />
          <Tool icon="cube" label="俯视" caret="wide" ml={-3} />
          <Tool icon="orbit" label="动态观察" />
          <Tool icon="local3d" label="局部三维" />
          <Sep />
          <Tool icon="full" label="全屏" />
          <Tool icon="zoom" label="缩放" caret="wide" />
          <Tool icon="hand" label="平移" caret="wide" />
          <Tool icon="screen" label="屏幕旋转" caret="tight" />
          <Sep />
          <Tool icon="floors" label="选择楼层" />
          <Tool icon="wire" label="线框" />
        </Band>
      </Row>

      <Workspace>
        <NavPanel>
          <PanelHead $active $pl={0}>
            <CutLabel>模块导航栏</CutLabel>
            <HeadSpacer />
            <Pin>⊥</Pin>
            <CloseBox $box>✕</CloseBox>
          </PanelHead>
          <NavButton $mt={1}>工程设置</NavButton>
          <NavButton>绘图输入</NavButton>
          <NavTools>
            <Icon name="plus" size={17} />
            <Icon name="minus" size={17} />
          </NavTools>
          <NavTree>
            {navTree.map((n, i) => <NavNode key={i} node={n} />)}
          </NavTree>
          <NavButton>单构件输入</NavButton>
          <NavButton>报表预览</NavButton>
        </NavPanel>

        <ListPanel>
          <PanelHead>
            <span>构件列表</span>
            <HeadSpacer />
            <Pin>⊥</Pin>
            <CloseBox>✕</CloseBox>
          </PanelHead>
          <ListTools>
            <Tool icon="newItem" label="新建" caret="tight" />
            <Icon name="bigX" size={14} />
            <Icon name="dup" />
          </ListTools>
          <SearchRow>
            <SearchInput>搜索构件...</SearchInput>
            <SearchBtn><Icon name="search" /></SearchBtn>
          </SearchRow>
          <ListTree>
            <TreeRow>
              <Svg $w={24} $h={16} viewBox="0 0 24 16">
                <path d="M16 6v6H10z" fill="#444" />
                <path d="M18 8h6M20.500 13v3" stroke="#777" strokeDasharray="1 1" />
              </Svg>
              <TreeBody>
                <Icon name="fbeam" />
                <span>承台梁</span>
              </TreeBody>
            </TreeRow>
            <ListItem>
              <Icon name="sun" size={11} />
              <T>CTL-1</T>
            </ListItem>
          </ListTree>
        </ListPanel>

        <Center>
          <Row $h={24}>
            <Band $w={791} $pl={3}>
              <Grip />
              <Tool icon="eraser" label="删除" />
              <Sep />
              <Tool icon="copy" label="复制" />
              <Tool icon="mirror" label="镜像" />
              <Sep />
              <Tool icon="move" label="移动" />
              <Tool icon="rotate" label="旋转" />
              <Sep />
              <Tool icon="extend" label="延伸" />
              <Tool icon="trim" label="修剪" />
              <Sep />
              <Tool icon="break" label="打断" />
              <Tool icon="merge" label="合并" />
              <Tool icon="split" label="分割" off />
              <Sep />
              <Tool icon="align" label="对齐" caret="tight" />
              <Tool icon="offset" label="偏移" />
              <Tool icon="stretch" label="拉伸" />
              <Sep />
              <Tool icon="grip" label="设置夹点" off />
            </Band>
          </Row>
          <Row $h={26} $mt={3}>
            <Band $w={567} $pl={7} $pr={4} $gap={4}>
              <Combo w={57} text="基础层" />
              <Combo w={68} text="基础" />
              <Combo w={67} text="承台梁" />
              <Combo w={67} text="CTL-1" />
              <Combo w={71} text="分层1" />
              <Sep />
              <Tool on icon="attr" label="属性" />
              <Tool on icon="editbar" label="编辑钢筋" ml={-5} />
              <More>»</More>
            </Band>
            <Band $grow $pr={4}>
              <Grip />
              <Tool icon="twopt" label="两点" />
              <Tool icon="parallel" label="平行" />
              <Tool icon="ptangle" label="点角" caret="wide" />
              <Tool icon="threept" label="三点辅轴" caret="wide" />
              <Tool icon="brush" label="删除辅轴" />
              <More>»</More>
            </Band>
          </Row>
          <Row $h={26} $mt={3}>
            <Band $w={933} $pl={6} $pr={4}>
              <Tool on icon="cursor" label="选择" />
              <Caret $ml={-5} />
              <Sep />
              <Tool icon="line" label="直线" />
              <Tool icon="ptlen" label="点加长度" />
              <Tool icon="arc" label="三点画弧" caret="wide" />
              <Combo w={56} text="" />
              <Tool icon="square" label="矩形" />
              <Sep />
              <Tool icon="smart" label="智能布置" caret="tight" />
              <Sep />
              <Tool icon="modify" label="修改梁段属性" />
              <Tool icon="insitu" label="原位标注" caret="wide" />
              <Tool icon="repick" label="重提梁跨" caret="wide" />
              <Tool icon="broom" label="梁跨数据复制" caret="wide" />
              <More>»</More>
            </Band>
            <Band $grow $pl={2}><Grip /></Band>
          </Row>

          <Drawing />

          <Row $h={27} $mt={1} $ml={474}>
            <Band $w={409} $pl={6} $gap={3}>
              <Combo w={59} text="不偏移" />
              <Sep $m={1} />
              <Muted>X=</Muted>
              <Spin $w={58}>0<SpinArrows><i /><i /></SpinArrows></Spin>
              <Muted>mm</Muted>
              <Muted $ml={2}>Y=</Muted>
              <Spin $w={58}>0<SpinArrows><i /><i /></SpinArrows></Spin>
              <Muted>mm</Muted>
              <Sep $m={1} />
              <Check />
              <SpinLabel>旋转</SpinLabel>
              <Spin $w={68}>0.000<SpinArrows><i /><i /></SpinArrows></Spin>
              <Muted>°</Muted>
            </Band>
          </Row>
          <Row $h={26} $mt={2}>
            <Band $w={209} $pl={3} $gap={4}>
              <Grip />
              <Tool icon="ortho" label="正交" />
              <Tool on icon="objsnap" label="对象捕捉" />
              <Tool on icon="dyn" label="动态输入" ml={-5} />
            </Band>
            <Band $w={263} $pl={2} $gap={5}>
              <Grip />
              <Tool icon="cross" label="交点" />
              <Tool on icon="perp" label="垂点" />
              <Tool on icon="mid" label="中点" ml={-6} />
              <Tool icon="vertex" label="顶点" />
              <Tool icon="coord" label="坐标" />
            </Band>
          </Row>

          <Lower>
            <Rail>
              <RailClose>×</RailClose>
              <RailDots />
            </Rail>
            <LowerMain>
              <RebarBar>
                <IconGroup $gap={10}>
                  <Tool icon="first" size={14} />
                  <Tool icon="prev" size={14} />
                  <Tool icon="next" size={14} />
                  <Tool icon="last" size={14} />
                </IconGroup>
                <Sep />
                <IconGroup $gap={9}>
                  <Tool icon="up" size={14} />
                  <Tool icon="down" size={14} />
                </IconGroup>
                <Sep />
                <Tool icon="ins" label="插入" off />
                <Tool icon="del" label="删除" off />
                <Tool icon="scale" label="缩尺配筋" />
                <Tool icon="info" label="钢筋信息" />
                <Tool icon="lib" label="钢筋图库" />
                <Tool icon="other" label="其他" caret="tight" />
                <span>关闭</span>
                <Sep />
                <Sum>单构件钢筋总重(kg) : 1736.706</Sum>
              </RebarBar>
              <TableWrap>
                <div>
                  <RebarRow $h={20}>
                    {rebarHead.map((h, i) => <HeadCell key={i} $hot={i === 2}><T>{h}</T></HeadCell>)}
                  </RebarRow>
                  {rebarRows.map((r) => (
                    <RebarRow key={r.no} $h={r.h}>
                      <Cell $center $bg={r.sel ? "#fdd08a" : "#f2f2f2"} $color={r.sel ? "#7d0080" : "#111"}><T>{r.no}</T></Cell>
                      <Cell $heavy><span><T>{r.name}</T></span></Cell>
                      <Cell $bg={r.sel ? "#b4efda" : undefined}><T>{r.d}</T></Cell>
                      <Cell $center $fs={11}>虫</Cell>
                      <Cell><T>{r.fig}</T></Cell>
                      <Cell $center>{r.draw}</Cell>
                      <Cell><span><T>{r.formula}</T></span></Cell>
                      <Cell><span><T>{r.desc}</T></span></Cell>
                      <Cell><T>{r.len}</T></Cell>
                      <Cell><T>{r.n}</T></Cell>
                      <Cell><T>{r.lap}</T></Cell>
                      <Cell><T>0</T></Cell>
                    </RebarRow>
                  ))}
                </div>
                <VScroll>
                  <Icon name="chevUp" size={14} />
                  <VThumb />
                  <Icon name="chevDown" size={14} />
                </VScroll>
              </TableWrap>
              <HScroll>
                <Icon name="chevLeft" size={14} />
                <HThumb />
                <Icon name="chevRight" size={14} />
              </HScroll>
            </LowerMain>
          </Lower>
        </Center>

        <PropsPanel>
          <PanelHead>属性编辑器</PanelHead>
          <PropsGrid>
            <PropRow $h={24}>
              <PropHead />
              <PropHead>属性名称</PropHead>
              <PropHead $hot $pl={150}>属性值</PropHead>
            </PropRow>
            {props.map((r, i) => <PropLine key={i} index={i + 1} row={r} />)}
          </PropsGrid>
        </PropsPanel>
      </Workspace>

      <BottomSliver viewBox="0 0 241 6">
        <rect x=".5" y=".5" width="260" height="20" rx="5" fill="#fff" stroke="#e2e2e2" />
        <path d="M10 5L34 1" stroke="#f09060" strokeWidth="3" />
        <path d="M48 0v6" stroke="#f5b8b8" />
        <path d="M54 3H241" stroke="#f2ecec" strokeWidth="5" />
      </BottomSliver>
    </Root>
  )
}
